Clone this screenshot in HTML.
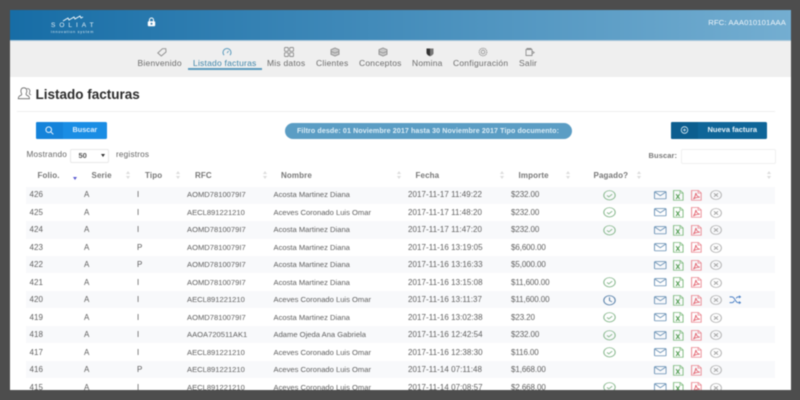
<!DOCTYPE html>
<html lang="es"><head><meta charset="utf-8"><title>Listado facturas</title>
<style>
html,body{margin:0;padding:0;width:800px;height:400px;overflow:hidden;background:#4d4d4d}
*{box-sizing:border-box}
body{font-family:"Liberation Sans",sans-serif}
#f{position:absolute;left:10px;top:10px;width:781px;height:380px;background:#fff;overflow:hidden;filter:blur(.4px)}
#f>*{position:absolute}
.t{position:absolute;white-space:nowrap;line-height:10px}
.hd{left:0;top:0;width:781px;height:30px;background:linear-gradient(90deg,#176da6,#74aed1)}
.nav{left:0;top:30px;width:781px;height:37px;background:#efefef;border-top:1px solid #a9c6da}
.n{font-size:8.5px;letter-spacing:.22px;color:#6c6c6c;top:48px}
.ni{position:absolute;top:37px;width:10px;height:10px}
.row{left:16px;width:749px;height:17.4px;background:#f8f9fb}
.r{left:0;width:781px;height:0}
.r .t{top:-5px;color:#5f5f5f;font-size:8px;letter-spacing:.05px}
.fo{left:19.5px}.se{left:74px}.ti{left:127px}
.r .rf{left:177px;font-size:7.6px;letter-spacing:0}
.r .no{left:263.5px;font-size:7.6px;letter-spacing:0}
.fe{left:398px}.im{left:501px;letter-spacing:0}
.r .im{letter-spacing:-.1px}
.th{font-size:8px;font-weight:bold;letter-spacing:.12px;color:#777;top:161px}
.s{position:absolute;top:161px;width:5px;height:9px}
.s:before{content:"";position:absolute;left:0;top:0;border:2.5px solid transparent;border-top:0;border-bottom:3px solid #ddd}
.s:after{content:"";position:absolute;left:0;top:5px;border:2.5px solid transparent;border-bottom:0;border-top:3px solid #ddd}
svg{position:absolute;overflow:visible;fill:none}
.ok{left:593px;top:-5.3px;width:13px;height:10.6px}
.im1{left:643.5px;top:-4.2px;width:12.6px;height:8.4px}
.ix{left:663.3px;top:-5.3px;width:10.7px;height:10.8px}
.ip{left:681px;top:-5.3px;width:10.8px;height:10.8px}
.id{left:699.8px;top:-5px;width:12px;height:10px}
</style></head><body>
<svg width="0" height="0" style="position:absolute"><defs>
<symbol id="ok" viewBox="0 0 13 13" preserveAspectRatio="none"><circle cx="6.5" cy="6.5" r="5.7" fill="none" stroke="#86b78c" stroke-width="1"/><path d="M4 6.7l1.800 1.800 3.400-3.400" fill="none" stroke="#86b78c" stroke-width="1"/></symbol>
<symbol id="clk" viewBox="0 0 13 13" preserveAspectRatio="none"><circle cx="6.5" cy="6.5" r="5.7" fill="none" stroke="#5f86ad" stroke-width="1.1"/><path d="M6.5 2.800v3.900l2.500 1.800" fill="none" stroke="#5f86ad" stroke-width="1.1"/></symbol>
<symbol id="m" viewBox="0 0 13 10" preserveAspectRatio="none"><rect x=".5" y=".7" width="12" height="8.600" rx="1" fill="none" stroke="#7096b8" stroke-width="1"/><path d="M.8 1.200l5.700 4.400 5.700-4.400" fill="none" stroke="#7096b8" stroke-width="1"/></symbol>
<symbol id="x" viewBox="0 0 11 13" preserveAspectRatio="none"><path d="M.6.6h6.800l3 3v8.800H.6z" fill="none" stroke="#7dba7d" stroke-width="1"/><path d="M7.200.8v3h3" fill="none" stroke="#7dba7d" stroke-width=".8"/><path d="M3.200 5l3.600 5.800M6.800 5l-3.600 5.800" fill="none" stroke="#4f9c4f" stroke-width="1.100"/></symbol>
<symbol id="p" viewBox="0 0 11 13" preserveAspectRatio="none"><path d="M.6.6h6.800l3 3v8.800H.6z" fill="none" stroke="#ea8791" stroke-width="1"/><path d="M7.200.8v3h3" fill="none" stroke="#ea8791" stroke-width=".8"/><path d="M5 3.500c.6 3 1.400 4.500 4 5.200-2.600-.1-5 .6-6.600 2.300 1.400-2.300 2.300-4.700 2.600-7.500z" fill="none" stroke="#e4636f" stroke-width=".9"/></symbol>
<symbol id="d" viewBox="0 0 12 12" preserveAspectRatio="none"><circle cx="6" cy="6" r="5.400" fill="none" stroke="#b3b3b3" stroke-width="1"/><path d="M4 4l4 4M8 4l-4 4" fill="none" stroke="#a0a0a0" stroke-width="1"/></symbol>
</defs></svg>
<div id="f">
<div class="hd"></div>
<svg style="left:52.7px;top:5px" width="20" height="7" viewBox="0 0 20 7"><path d="M0 6L5 3l1 2 5-3 1 2 5-3 1 2 2-1" stroke="#fff" stroke-width=".9"/></svg>
<div class="t" style="left:41px;top:10.8px;font-size:6.5px;letter-spacing:4px;color:#e8f2f8">SOLIAT</div>
<div class="t" style="left:41px;top:16.5px;font-size:3.7px;letter-spacing:.8px;color:#dbe9f2">innovation system</div>
<svg style="left:136.5px;top:6.5px" width="9" height="10" viewBox="0 0 9 10"><path d="M2.500 4.500V3a2 2 0 0 1 4 0v1.500" stroke="#fff" stroke-width="1"/><rect x=".8" y="4.300" width="7.400" height="4.900" rx="1" fill="#fff"/><circle cx="4.500" cy="6.700" r="1" fill="#3179ad"/></svg>
<div class="t" style="right:5px;top:7.5px;font-size:7.7px;letter-spacing:.1px;color:#eef5fa">RFC: AAA010101AAA</div>

<div class="nav"></div>
<svg class="ni" style="left:147px" viewBox="0 0 10 10"><path d="M.8 6l4.700-4.300h3.300l.2 3.300L4.300 9z" stroke="#8f8f8f" stroke-width=".9"/></svg>
<svg class="ni" style="left:211.7px" viewBox="0 0 10 10"><path d="M2 8.200a4 4 0 1 1 6 0" stroke="#5b9bbd" stroke-width="1"/><path d="M5 6l1.600-2" stroke="#5b9bbd" stroke-width=".9"/></svg>
<svg class="ni" style="left:274px" viewBox="0 0 10 10"><g stroke="#8f8f8f" stroke-width=".9"><rect x=".5" y=".5" width="3.800" height="3.800" rx=".8"/><rect x="5.700" y=".5" width="3.800" height="3.800" rx=".8"/><rect x=".5" y="5.700" width="3.800" height="3.800" rx=".8"/><rect x="5.700" y="5.700" width="3.800" height="3.800" rx=".8"/></g></svg>
<svg class="ni" style="left:320px" viewBox="0 0 10 10"><path d="M5 1l4 1.700v4.600L5 9 1 7.300V2.700z" fill="#c9c9c9" stroke="#8f8f8f" stroke-width=".9"/><path d="M1 4.500l4 1.500 4-1.500" stroke="#8f8f8f" stroke-width=".7"/></svg>
<svg class="ni" style="left:368px" viewBox="0 0 10 10"><path d="M5 1l4 1.700v4.600L5 9 1 7.300V2.700z" fill="#c9c9c9" stroke="#8f8f8f" stroke-width=".9"/><path d="M1 4.500l4 1.500 4-1.500" stroke="#8f8f8f" stroke-width=".7"/></svg>
<svg class="ni" style="left:415px" viewBox="0 0 10 10"><path d="M1.500 1.500h7v4c0 2-1.700 3-3.500 3.700-1.800-.7-3.500-1.700-3.500-3.700z" fill="#333"/><path d="M5 1.500h3.500v4c0 2-1.700 3-3.500 3.700z" fill="#777"/></svg>
<svg class="ni" style="left:468px" viewBox="0 0 10 10"><circle cx="5" cy="5" r="3.800" stroke="#8f8f8f" stroke-width="1" stroke-dasharray="1.200 .6"/><circle cx="5" cy="5" r="1.800" stroke="#8f8f8f" stroke-width=".8"/></svg>
<svg class="ni" style="left:515px" viewBox="0 0 10 10"><path d="M1 2.500h6v6H1zM2 2.500v-1h4v1M7 4l2.200 1.500L7 7" stroke="#8f8f8f" stroke-width=".9"/></svg>
<div class="t n" style="left:127.5px">Bienvenido</div>
<div class="t n" style="left:183px;color:#3f86aa">Listado facturas</div>
<div style="left:177.5px;top:58px;width:74px;height:1.500px;background:#5b9bbd"></div>
<div class="t n" style="left:257px">Mis datos</div>
<div class="t n" style="left:306px">Clientes</div>
<div class="t n" style="left:349px">Conceptos</div>
<div class="t n" style="left:402px">Nomina</div>
<div class="t n" style="left:443px">Configuración</div>
<div class="t n" style="left:509px">Salir</div>

<svg style="left:7px;top:77px" width="15" height="12.500" viewBox="0 0 17 15"><path d="M1 14c0-3 2-3.500 4-4.500.5-.7.200-1.300-.2-2C3.500 5 4 1 7.700 1s4.200 3.700 3 6.300c-.3.800-.6 1.500-.1 2.200 2 1 3.900 1.500 3.900 4.500z" stroke="#666" stroke-width="1"/><path d="M11.500 2c2.500-.5 4 1.500 3.300 4-.3 1-.8 1.800-.3 2.500l1.800 1" stroke="#666" stroke-width=".9"/></svg>
<div class="t" style="left:25.5px;top:78px;font-size:13.5px;line-height:13px;font-weight:bold;color:#2b2b2b">Listado facturas</div>
<div style="left:7px;top:101px;width:758px;height:1px;background:#eee"></div>

<div style="left:25.5px;top:112px;width:71px;height:16.500px;background:#1a8de4;border-radius:1.500px"></div>
<div style="left:25.5px;top:112px;width:27px;height:16.500px;background:#1583da;border-radius:1.500px 0 0 1.500px"></div>
<svg style="left:35px;top:115.5px" width="9" height="9" viewBox="0 0 9 9"><circle cx="3.700" cy="3.700" r="2.800" stroke="#e8f4ff" stroke-width="1"/><path d="M5.800 5.800l2.500 2.500" stroke="#e8f4ff" stroke-width="1"/></svg>
<div class="t" style="left:62.5px;top:115px;font-size:7.300px;font-weight:bold;color:#dcefff">Buscar</div>

<div style="left:275px;top:112.5px;width:287px;height:16px;background:#5b9dc4;border-radius:8px"></div>
<div class="t" style="left:287px;top:115.5px;font-size:7.100px;font-weight:bold;letter-spacing:.1px;color:#dcedf6">Filtro desde: 01 Noviembre 2017 hasta 30 Noviembre 2017 Tipo documento:</div>

<div style="left:660.5px;top:112px;width:96px;height:16.500px;background:#0f6598;border-radius:1.500px"></div>
<div style="left:660.5px;top:112px;width:27px;height:16.500px;background:#0c5e8f;border-radius:1.500px 0 0 1.500px"></div>
<svg style="left:670px;top:115.5px" width="9" height="9" viewBox="0 0 9 9"><circle cx="4.500" cy="4" r="3.300" stroke="#dcedf6" stroke-width=".8"/><path d="M3 4h3M4.500 2.500v3" stroke="#dcedf6" stroke-width=".7"/></svg>
<div class="t" style="left:697.5px;top:115px;font-size:7.500px;font-weight:bold;color:#e6f2f9">Nueva factura</div>

<div class="t" style="left:16.5px;top:140px;font-size:8.200px;letter-spacing:.2px;color:#666">Mostrando</div>
<div style="left:59.5px;top:138.5px;width:39px;height:14px;border:1px solid #e8e8e8;border-radius:2px;background:#fff"></div>
<div class="t" style="left:68.5px;top:141px;font-size:7.500px;font-weight:bold;color:#555">50</div>
<div style="left:91px;top:144px;border:2px solid transparent;border-bottom:0;border-top:3px solid #333"></div>
<div class="t" style="left:106px;top:140px;font-size:8.200px;letter-spacing:.2px;color:#666">registros</div>
<div class="t" style="left:638.5px;top:141px;font-size:7.500px;font-weight:bold;letter-spacing:.1px;color:#777">Buscar:</div>
<div style="left:670.5px;top:139px;width:95px;height:14.500px;border:1px solid #efefef;border-radius:2px;background:#fff"></div>

<div class="t th" style="left:27.5px">Folio.</div>
<div style="left:62.5px;top:167px;border:2.500px solid transparent;border-bottom:0;border-top:3px solid #5a5ad0"></div>
<div class="t th" style="left:81.5px">Serie</div><div class="s" style="left:115.5px"></div>
<div class="t th" style="left:135px">Tipo</div><div class="s" style="left:166px"></div>
<div class="t th" style="left:185px">RFC</div><div class="s" style="left:252.5px"></div>
<div class="t th" style="left:281px;left:271px">Nombre</div><div class="s" style="left:386.5px"></div>
<div class="t th" style="left:405.5px">Fecha</div><div class="s" style="left:490px"></div>
<div class="t th" style="left:508.5px">Importe</div><div class="s" style="left:556px"></div>
<div class="t th" style="left:583.5px">Pagado?</div><div class="s" style="left:626.5px"></div>
<div class="s" style="left:757px"></div>

<div class="row" style="top:176.500px"></div>
<div class="row" style="top:211.300px"></div>
<div class="row" style="top:246.100px"></div>
<div class="row" style="top:280.900px"></div>
<div class="row" style="top:315.700px"></div>
<div class="row" style="top:350.500px"></div>

<div class="r" style="top:185px"><div class="t fo">426</div><div class="t se">A</div><div class="t ti">I</div><div class="t rf">AOMD7810079I7</div><div class="t no">Acosta Martinez Diana</div><div class="t fe">2017-11-17 11:49:22</div><div class="t im">$232.00</div><svg class="ok"><use href="#ok"/></svg><svg class="im1"><use href="#m"/></svg><svg class="ix"><use href="#x"/></svg><svg class="ip"><use href="#p"/></svg><svg class="id"><use href="#d"/></svg></div>
<div class="r" style="top:202.500px"><div class="t fo">425</div><div class="t se">A</div><div class="t ti">I</div><div class="t rf">AECL891221210</div><div class="t no">Aceves Coronado Luis Omar</div><div class="t fe">2017-11-17 11:48:20</div><div class="t im">$232.00</div><svg class="ok"><use href="#ok"/></svg><svg class="im1"><use href="#m"/></svg><svg class="ix"><use href="#x"/></svg><svg class="ip"><use href="#p"/></svg><svg class="id"><use href="#d"/></svg></div>
<div class="r" style="top:220px"><div class="t fo">424</div><div class="t se">A</div><div class="t ti">I</div><div class="t rf">AOMD7810079I7</div><div class="t no">Acosta Martinez Diana</div><div class="t fe">2017-11-17 11:47:20</div><div class="t im">$232.00</div><svg class="ok"><use href="#ok"/></svg><svg class="im1"><use href="#m"/></svg><svg class="ix"><use href="#x"/></svg><svg class="ip"><use href="#p"/></svg><svg class="id"><use href="#d"/></svg></div>
<div class="r" style="top:237.500px"><div class="t fo">423</div><div class="t se">A</div><div class="t ti">P</div><div class="t rf">AOMD7810079I7</div><div class="t no">Acosta Martinez Diana</div><div class="t fe">2017-11-16 13:19:05</div><div class="t im">$6,600.00</div><svg class="im1"><use href="#m"/></svg><svg class="ix"><use href="#x"/></svg><svg class="ip"><use href="#p"/></svg><svg class="id"><use href="#d"/></svg></div>
<div class="r" style="top:255px"><div class="t fo">422</div><div class="t se">A</div><div class="t ti">P</div><div class="t rf">AOMD7810079I7</div><div class="t no">Acosta Martinez Diana</div><div class="t fe">2017-11-16 13:16:33</div><div class="t im">$5,000.00</div><svg class="im1"><use href="#m"/></svg><svg class="ix"><use href="#x"/></svg><svg class="ip"><use href="#p"/></svg><svg class="id"><use href="#d"/></svg></div>
<div class="r" style="top:272.500px"><div class="t fo">421</div><div class="t se">A</div><div class="t ti">I</div><div class="t rf">AOMD7810079I7</div><div class="t no">Acosta Martinez Diana</div><div class="t fe">2017-11-16 13:15:08</div><div class="t im">$11,600.00</div><svg class="ok"><use href="#ok"/></svg><svg class="im1"><use href="#m"/></svg><svg class="ix"><use href="#x"/></svg><svg class="ip"><use href="#p"/></svg><svg class="id"><use href="#d"/></svg></div>
<div class="r" style="top:290px"><div class="t fo">420</div><div class="t se">A</div><div class="t ti">I</div><div class="t rf">AECL891221210</div><div class="t no">Aceves Coronado Luis Omar</div><div class="t fe">2017-11-16 13:11:37</div><div class="t im">$11,600.00</div><svg class="ok"><use href="#clk"/></svg><svg class="im1"><use href="#m"/></svg><svg class="ix"><use href="#x"/></svg><svg class="ip"><use href="#p"/></svg><svg class="id"><use href="#d"/></svg><svg style="left:719.3px;top:-5px" width="12.500" height="9.500" viewBox="0 0 13 10"><path d="M.5 2h2.500c3 0 3.500 6 6.500 6h2.500M.5 8h2.500c1.200 0 2-1 2.600-2M7.400 3.500C8 2.700 8.600 2 9.500 2h2.500" stroke="#4a7fc4" stroke-width="1"/><path d="M10.500.3L12.800 2l-2.300 1.700zM10.500 6.300L12.800 8l-2.300 1.700z" fill="#4a7fc4"/></svg></div>
<div class="r" style="top:307.500px"><div class="t fo">419</div><div class="t se">A</div><div class="t ti">I</div><div class="t rf">AOMD7810079I7</div><div class="t no">Acosta Martinez Diana</div><div class="t fe">2017-11-16 13:02:38</div><div class="t im">$23.20</div><svg class="ok"><use href="#ok"/></svg><svg class="im1"><use href="#m"/></svg><svg class="ix"><use href="#x"/></svg><svg class="ip"><use href="#p"/></svg><svg class="id"><use href="#d"/></svg></div>
<div class="r" style="top:325px"><div class="t fo">418</div><div class="t se">A</div><div class="t ti">I</div><div class="t rf">AAOA720511AK1</div><div class="t no">Adame Ojeda Ana Gabriela</div><div class="t fe">2017-11-16 12:42:54</div><div class="t im">$232.00</div><svg class="ok"><use href="#ok"/></svg><svg class="im1"><use href="#m"/></svg><svg class="ix"><use href="#x"/></svg><svg class="ip"><use href="#p"/></svg><svg class="id"><use href="#d"/></svg></div>
<div class="r" style="top:342.500px"><div class="t fo">417</div><div class="t se">A</div><div class="t ti">I</div><div class="t rf">AECL891221210</div><div class="t no">Aceves Coronado Luis Omar</div><div class="t fe">2017-11-16 12:38:30</div><div class="t im">$116.00</div><svg class="ok"><use href="#ok"/></svg><svg class="im1"><use href="#m"/></svg><svg class="ix"><use href="#x"/></svg><svg class="ip"><use href="#p"/></svg><svg class="id"><use href="#d"/></svg></div>
<div class="r" style="top:360px"><div class="t fo">416</div><div class="t se">A</div><div class="t ti">P</div><div class="t rf">AECL891221210</div><div class="t no">Aceves Coronado Luis Omar</div><div class="t fe">2017-11-14 07:11:48</div><div class="t im">$1,668.00</div><svg class="im1"><use href="#m"/></svg><svg class="ix"><use href="#x"/></svg><svg class="ip"><use href="#p"/></svg><svg class="id"><use href="#d"/></svg></div>
<div class="r" style="top:377.500px"><div class="t fo">415</div><div class="t se">A</div><div class="t ti">I</div><div class="t rf">AECL891221210</div><div class="t no">Aceves Coronado Luis Omar</div><div class="t fe">2017-11-14 07:08:57</div><div class="t im">$2,668.00</div><svg class="ok"><use href="#ok"/></svg><svg class="im1"><use href="#m"/></svg><svg class="ix"><use href="#x"/></svg><svg class="ip"><use href="#p"/></svg><svg class="id"><use href="#d"/></svg></div>
</div>
</body></html>
